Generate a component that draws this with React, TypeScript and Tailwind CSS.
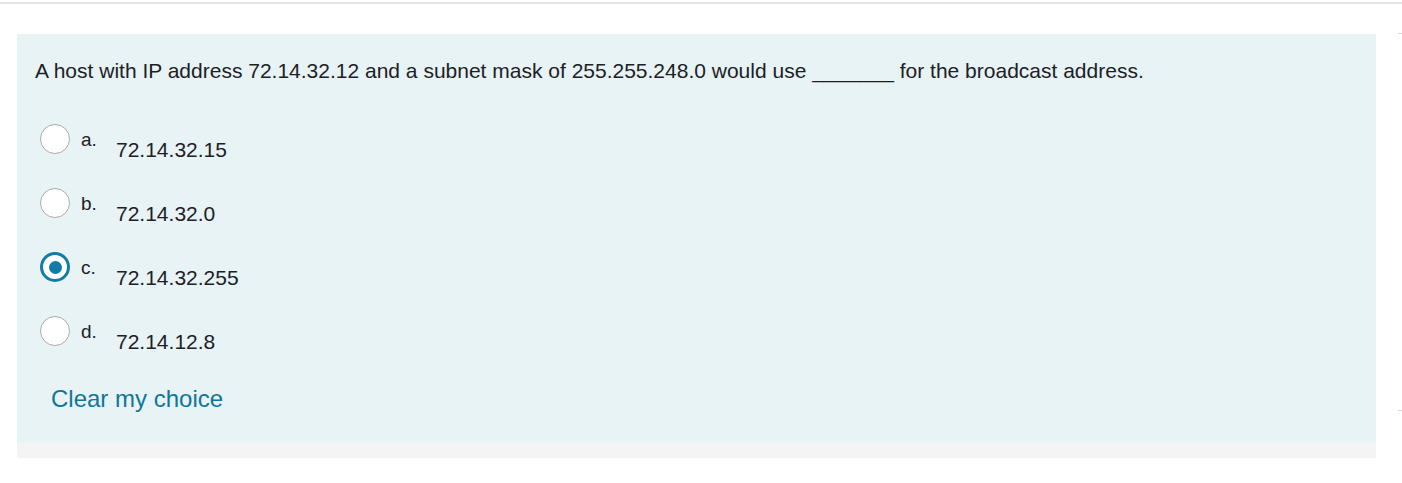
const options = [
  { letter: "a.", text: "72.14.32.15", checked: false },
  { letter: "b.", text: "72.14.32.0", checked: false },
  { letter: "c.", text: "72.14.32.255", checked: true },
  { letter: "d.", text: "72.14.12.8", checked: false },
];

function Radio({ checked }: { checked: boolean }) {
  if (checked) {
    return (
      <span className="flex h-[30px] w-[30px] shrink-0 items-center justify-center rounded-full border-[3px] border-[#127ca6] bg-white">
        <span className="h-[13px] w-[13px] rounded-full bg-[#127ca6]" />
      </span>
    );
  }
  return (
    <span className="h-[30px] w-[30px] shrink-0 rounded-full border border-[#ababab] bg-white" />
  );
}

export default function App() {
  return (
    <div className="relative min-h-[483px] bg-white font-['Liberation_Sans',Arial,sans-serif] text-[#1d2125]">
      <div className="h-[2px]" />
      <div className="h-[2px] bg-[#e3e3e3]" />
      <div className="ml-[17px] mt-[30px] w-[1359px]">
        <div className="bg-[#e7f3f5] pb-[29px] pl-[18px] pr-4 pt-[25px]">
          <p className="text-[21px] leading-[24px]">
            A host with IP address 72.14.32.12 and a subnet mask of 255.255.248.0 would use _______ for the broadcast address.
          </p>
          <div className="mt-[41px] flex flex-col gap-[24px] pl-[5px]">
            {options.map((o) => (
              <div key={o.letter} className="flex h-[40px] items-start">
                <Radio checked={o.checked} />
                <span className="ml-[11px] mt-[4px] w-[35px] text-[19px] leading-[24px]">
                  {o.letter}
                </span>
                <span className="mt-[14px] text-[21px] leading-[24px]">{o.text}</span>
              </div>
            ))}
          </div>
          <div className="mt-[29px] pl-[16px]">
            <a className="text-[24px] leading-[28px] text-[#10769a]">Clear my choice</a>
          </div>
        </div>
        <div className="h-[15px] bg-[#f4f4f4]" />
      </div>
      <span className="absolute left-[1398px] top-[33px] h-px w-[4px] bg-[#d8d8d8]" />
      <span className="absolute left-[1398px] top-[410px] h-px w-[4px] bg-[#d8d8d8]" />
    </div>
  );
}
